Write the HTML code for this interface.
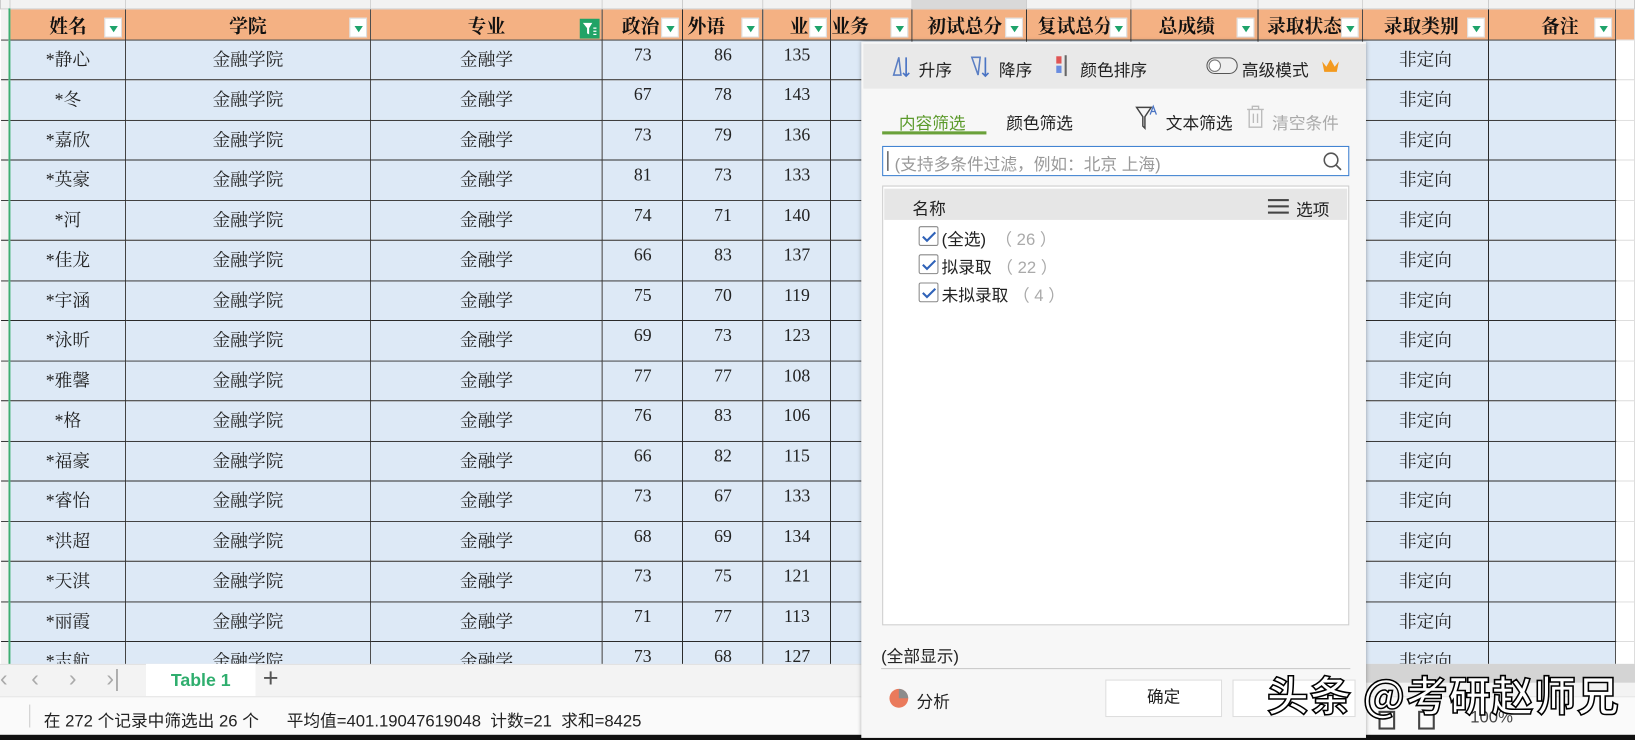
<!DOCTYPE html>
<html><head><meta charset="utf-8">
<style>
*{margin:0;padding:0;box-sizing:border-box}
html,body{width:1635px;height:740px;overflow:hidden;background:#fff}
#w{position:absolute;left:0;top:0;width:1568px;height:710px;transform:scale(1.04273,1.04225);transform-origin:0 0;overflow:hidden;background:#fff}
.serif{font-family:"Liberation Serif","Noto Serif CJK SC",serif}
.sans{font-family:"Liberation Sans","Noto Sans CJK SC",sans-serif}
table{position:absolute;left:0;top:0;border-collapse:collapse;table-layout:fixed}
td{border:1px solid #2a2a2a;font-family:"Liberation Serif","Noto Serif CJK SC",serif;font-size:17px;color:#222;text-align:center;vertical-align:top;padding-top:4px;background:#dde9f6;height:38.5px;overflow:hidden;white-space:nowrap;position:relative}
tr.let td{height:8px;background:#f2f2f2;border:1px solid #ccc;border-top:none;padding:0}
tr.hd td{height:30px;background:#f4b183;font-weight:bold;font-size:18px;color:#111;padding-top:2px;vertical-align:middle}
td.rn{background:#f2f2f2;border-left:none;border-right:2px solid #3dae73;color:#2e9e60;font-size:12px}
td.e{background:#fff;border:1px solid #ddd}
.dd{position:absolute;right:3px;top:8px;width:17px;height:19px;background:#fff;border:1px solid #ddd}
.dd:after{content:"";position:absolute;left:4px;top:7px;border-left:4px solid transparent;border-right:4px solid transparent;border-top:6px solid #1ea36a}
.fl{position:absolute;right:2px;top:9px;width:19px;height:19px;background:#21a366}
.dlg{position:absolute;left:826px;top:40px;width:484px;height:668px;background:#f7f7f7;box-shadow:0 0 4px rgba(0,0,0,.35);font-family:"Liberation Sans","Noto Sans CJK SC",sans-serif;font-size:16px;color:#222}
.dlg div{position:absolute}
td.h1{text-align:right;padding-right:0}
</style></head><body><div id="w">
<table>
<colgroup><col style="width:9px"><col style="width:111px"><col style="width:235px"><col style="width:223px"><col style="width:77px"><col style="width:77px"><col style="width:65px"><col style="width:78px"><col style="width:110px"><col style="width:100px"><col style="width:122px"><col style="width:100px"><col style="width:121px"><col style="width:122px"><col style="width:18px"></colgroup>
<tr class="let"><td></td><td></td><td></td><td></td><td></td><td></td><td></td><td></td><td style="background:#d9d9d9"></td><td></td><td></td><td></td><td></td><td></td><td></td></tr>
<tr class="hd"><td class="rn" style="background:#f2f2f2"></td><td>姓名<span class="dd"></span></td><td>学院<span class="dd"></span></td><td>专业<span class="fl"><svg width="19" height="19" viewBox="0 0 19 19" style="position:absolute;left:0;top:0"><path d="M3 4 H12 L9 9 V15 L7 14 V9 Z" fill="#fff"/><path d="M13 9 H16 M13 12 H16 M13 15 H16" stroke="#fff" stroke-width="1.2"/></svg></span></td><td style="text-align:left;padding-left:18px">政治<span class="dd"></span></td><td style="text-align:left;padding-left:4px">外语<span class="dd"></span></td><td style="text-align:left;padding-left:25px">业<span class="dd"></span></td><td style="text-align:left">业务<span class="dd"></span></td><td style="text-align:left;padding-left:14px">初试总分<span class="dd"></span></td><td style="text-align:left;padding-left:10px">复试总分<span class="dd"></span></td><td style="text-align:left;padding-left:26px">总成绩<span class="dd"></span></td><td style="text-align:left;padding-left:8px">录取状态<span class="dd"></span></td><td style="text-align:left;padding-left:20px">录取类别<span class="dd"></span></td><td style="text-align:left;padding-left:50px">备注<span class="dd"></span></td><td class="e"></td></tr>
<tr><td class="rn"></td><td>*静心</td><td>金融学院</td><td>金融学</td><td>73</td><td>86</td><td>135</td><td class="h1">1</td><td></td><td></td><td></td><td></td><td>非定向</td><td></td><td class="e"></td></tr>
<tr><td class="rn"></td><td>*冬</td><td>金融学院</td><td>金融学</td><td>67</td><td>78</td><td>143</td><td class="h1">1</td><td></td><td></td><td></td><td></td><td>非定向</td><td></td><td class="e"></td></tr>
<tr><td class="rn"></td><td>*嘉欣</td><td>金融学院</td><td>金融学</td><td>73</td><td>79</td><td>136</td><td class="h1">1</td><td></td><td></td><td></td><td></td><td>非定向</td><td></td><td class="e"></td></tr>
<tr><td class="rn"></td><td>*英豪</td><td>金融学院</td><td>金融学</td><td>81</td><td>73</td><td>133</td><td class="h1">1</td><td></td><td></td><td></td><td></td><td>非定向</td><td></td><td class="e"></td></tr>
<tr><td class="rn"></td><td>*河</td><td>金融学院</td><td>金融学</td><td>74</td><td>71</td><td>140</td><td class="h1">1</td><td></td><td></td><td></td><td></td><td>非定向</td><td></td><td class="e"></td></tr>
<tr><td class="rn"></td><td>*佳龙</td><td>金融学院</td><td>金融学</td><td>66</td><td>83</td><td>137</td><td class="h1">1</td><td></td><td></td><td></td><td></td><td>非定向</td><td></td><td class="e"></td></tr>
<tr><td class="rn"></td><td>*宇涵</td><td>金融学院</td><td>金融学</td><td>75</td><td>70</td><td>119</td><td class="h1">1</td><td></td><td></td><td></td><td></td><td>非定向</td><td></td><td class="e"></td></tr>
<tr><td class="rn"></td><td>*泳昕</td><td>金融学院</td><td>金融学</td><td>69</td><td>73</td><td>123</td><td class="h1">1</td><td></td><td></td><td></td><td></td><td>非定向</td><td></td><td class="e"></td></tr>
<tr><td class="rn"></td><td>*雅馨</td><td>金融学院</td><td>金融学</td><td>77</td><td>77</td><td>108</td><td class="h1">1</td><td></td><td></td><td></td><td></td><td>非定向</td><td></td><td class="e"></td></tr>
<tr><td class="rn"></td><td>*格</td><td>金融学院</td><td>金融学</td><td>76</td><td>83</td><td>106</td><td class="h1">1</td><td></td><td></td><td></td><td></td><td>非定向</td><td></td><td class="e"></td></tr>
<tr><td class="rn"></td><td>*福豪</td><td>金融学院</td><td>金融学</td><td>66</td><td>82</td><td>115</td><td class="h1">1</td><td></td><td></td><td></td><td></td><td>非定向</td><td></td><td class="e"></td></tr>
<tr><td class="rn"></td><td>*睿怡</td><td>金融学院</td><td>金融学</td><td>73</td><td>67</td><td>133</td><td class="h1">1</td><td></td><td></td><td></td><td></td><td>非定向</td><td></td><td class="e"></td></tr>
<tr><td class="rn"></td><td>*洪超</td><td>金融学院</td><td>金融学</td><td>68</td><td>69</td><td>134</td><td class="h1">1</td><td></td><td></td><td></td><td></td><td>非定向</td><td></td><td class="e"></td></tr>
<tr><td class="rn"></td><td>*天淇</td><td>金融学院</td><td>金融学</td><td>73</td><td>75</td><td>121</td><td class="h1">1</td><td></td><td></td><td></td><td></td><td>非定向</td><td></td><td class="e"></td></tr>
<tr><td class="rn"></td><td>*丽霞</td><td>金融学院</td><td>金融学</td><td>71</td><td>77</td><td>113</td><td class="h1">1</td><td></td><td></td><td></td><td></td><td>非定向</td><td></td><td class="e"></td></tr>
<tr><td class="rn"></td><td>*志航</td><td>金融学院</td><td>金融学</td><td>73</td><td>68</td><td>127</td><td class="h1">1</td><td></td><td></td><td></td><td></td><td>非定向</td><td></td><td class="e"></td></tr>
</table>

<!-- tab bar -->
<div class="sans" style="position:absolute;left:0;top:637px;width:1568px;height:31px;background:#f3f3f3;border-top:1px solid #e2e2e2"></div>
<div class="sans" style="position:absolute;left:1310px;top:637px;width:258px;height:18px;background:#d4d4d4"></div>
<div class="sans" style="position:absolute;left:0;top:638px;font-size:22px;color:#aaa">‹</div>
<div class="sans" style="position:absolute;left:30px;top:638px;font-size:22px;color:#aaa">‹</div>
<div class="sans" style="position:absolute;left:66px;top:638px;font-size:22px;color:#aaa">›</div>
<div class="sans" style="position:absolute;left:102px;top:638px;font-size:22px;color:#aaa">›|</div>
<div class="sans" style="position:absolute;left:140px;top:637px;width:105px;height:31px;background:#fff;color:#2fae6e;font-weight:bold;font-size:17px;text-align:center;line-height:31px">Table 1</div>
<div class="sans" style="position:absolute;left:252px;top:635px;font-size:26px;color:#555">+</div>
<!-- status bar -->
<div class="sans" style="position:absolute;left:0;top:668px;width:1568px;height:37px;background:#fafafa;border-top:1px solid #e4e4e4"></div>
<div class="sans" style="position:absolute;left:28px;top:676px;width:1px;height:22px;background:#ccc"></div>
<div class="sans" style="position:absolute;left:42px;top:678px;font-size:16px;color:#222;white-space:pre">在 272 个记录中筛选出 26 个      平均值=401.19047619048  计数=21  求和=8425</div>
<div class="sans" style="position:absolute;left:1322px;top:682px;width:16px;height:18px;border:2px solid #444"></div>
<div class="sans" style="position:absolute;left:1360px;top:682px;width:16px;height:18px;border:2px solid #444"></div>
<div class="sans" style="position:absolute;left:1410px;top:680px;font-size:16px;color:#444">100%</div>
<div style="position:absolute;left:0;top:705px;width:1568px;height:5px;background:#111"></div>

<!-- dialog -->
<div class="dlg">
 <div style="left:2px;top:2px;width:482px;height:43px;background:#e9e9e9"></div>
 <svg style="position:absolute;left:28px;top:12px" width="24" height="24" viewBox="0 0 24 24"><path d="M3 20 L8 3 L10 20 Z" fill="none" stroke="#5b7fc4" stroke-width="1.5"/><path d="M15 3 V21 M12 18 L15 21 L18 18" fill="none" stroke="#4a74c4" stroke-width="1.6"/></svg>
 <div style="left:55px;top:14px">升序</div>
 <svg style="position:absolute;left:104px;top:12px" width="24" height="24" viewBox="0 0 24 24"><path d="M2 3 H10 L8 20 Z" fill="none" stroke="#5b7fc4" stroke-width="1.5"/><path d="M15 3 V21 M12 18 L15 21 L18 18" fill="none" stroke="#4a74c4" stroke-width="1.6"/></svg>
 <div style="left:132px;top:14px">降序</div>
 <div style="left:187px;top:14px;width:5px;height:7px;background:#e05555"></div>
 <div style="left:187px;top:23px;width:5px;height:7px;background:#6a8de0"></div>
 <div style="left:195px;top:13px;width:2px;height:20px;background:#666"></div>
 <div style="left:210px;top:14px">颜色排序</div>
 <div style="left:331px;top:15px;width:30px;height:16px;border:1.5px solid #555;border-radius:9px;background:#eee"></div>
 <div style="left:333px;top:17px;width:12px;height:12px;border-radius:50%;background:#fff;border:1px solid #777"></div>
 <div style="left:365px;top:14px">高级模式</div>
 <svg style="position:absolute;left:441px;top:15px" width="18" height="16" viewBox="0 0 18 16"><path d="M1 4 L5 9 L9 2 L13 9 L17 4 L15 14 H3 Z" fill="#f39a1f"/></svg>

 <div style="left:36px;top:65px;color:#5b9a2b">内容筛选</div>
 <div style="left:20px;top:86px;width:100px;height:3px;background:#6aa13a"></div>
 <div style="left:139px;top:65px">颜色筛选</div>
 <svg style="position:absolute;left:262px;top:60px" width="24" height="26" viewBox="0 0 24 26"><path d="M2 3 H16 L10 12 V23 L8 21 V12 Z" fill="none" stroke="#444" stroke-width="1.4"/><path d="M15 10 L18 2 L21 10 M16 7 H20" fill="none" stroke="#4a74c4" stroke-width="1.2"/></svg>
 <div style="left:292px;top:65px">文本筛选</div>
 <svg style="position:absolute;left:368px;top:60px" width="20" height="24" viewBox="0 0 20 24"><path d="M2 5 H18 M7 5 V2 H13 V5 M4 5 V22 H16 V5 M8 9 V18 M12 9 V18" fill="none" stroke="#bbb" stroke-width="1.3"/></svg>
 <div style="left:394px;top:65px;color:#aaa">清空条件</div>

 <div style="left:20px;top:100px;width:448px;height:29px;background:#fff;border:1.5px solid #3b7fd0"></div>
 <div style="left:25px;top:105px;width:1px;height:19px;background:#222"></div>
 <div style="left:32px;top:104px;color:#999">(支持多条件过滤，例如：北京 上海)</div>
 <svg style="position:absolute;left:442px;top:105px" width="20" height="20" viewBox="0 0 20 20"><circle cx="8.5" cy="8.5" r="6.5" fill="none" stroke="#555" stroke-width="1.5"/><path d="M13 13 L18 18" stroke="#555" stroke-width="1.6"/></svg>

 <div style="left:20px;top:138px;width:448px;height:422px;background:#fff;border:1.5px solid #ccc"></div>
 <div style="left:22px;top:141px;width:444px;height:30px;background:#e6e6e6"></div>
 <div style="left:49px;top:147px">名称</div>
 <div style="left:390px;top:151px;width:20px;height:2px;background:#444;box-shadow:0 6px 0 #444,0 12px 0 #444"></div>
 <div style="left:417px;top:148px">选项</div>

 <div style="left:55px;top:177px;width:19px;height:19px;border:1.5px solid #888;border-radius:2px;background:#fff"></div>
 <svg style="position:absolute;left:58px;top:181px" width="14" height="12" viewBox="0 0 14 12"><path d="M1 6 L5 10 L13 2" fill="none" stroke="#2f62b8" stroke-width="2"/></svg>
 <div style="left:77px;top:176px">(全选)<span style="color:#aaa">&nbsp;&nbsp;（ 26 ）</span></div>
 <div style="left:55px;top:204px;width:19px;height:19px;border:1.5px solid #888;border-radius:2px;background:#fff"></div>
 <svg style="position:absolute;left:58px;top:208px" width="14" height="12" viewBox="0 0 14 12"><path d="M1 6 L5 10 L13 2" fill="none" stroke="#2f62b8" stroke-width="2"/></svg>
 <div style="left:77px;top:203px">拟录取<span style="color:#aaa">&nbsp;（ 22 ）</span></div>
 <div style="left:55px;top:231px;width:19px;height:19px;border:1.5px solid #888;border-radius:2px;background:#fff"></div>
 <svg style="position:absolute;left:58px;top:235px" width="14" height="12" viewBox="0 0 14 12"><path d="M1 6 L5 10 L13 2" fill="none" stroke="#2f62b8" stroke-width="2"/></svg>
 <div style="left:77px;top:230px">未拟录取<span style="color:#aaa">&nbsp;（ 4 ）</span></div>

 <div style="left:19px;top:576px">(全部显示)</div>
 <div style="left:19px;top:601px;width:450px;height:1px;background:#c8c8c8"></div>
 <svg style="position:absolute;left:26px;top:620px" width="20" height="20" viewBox="0 0 20 20"><circle cx="10" cy="10" r="9" fill="#ea7a5c"/><path d="M10 10 V1 A9 9 0 0 1 19 10 Z" fill="#8c8c8c"/></svg>
 <div style="left:53px;top:620px">分析</div>
 <div style="left:234px;top:612px;width:112px;height:36px;background:#fff;border:1px solid #ddd;text-align:center;line-height:34px">确定</div>
 <div style="left:356px;top:612px;width:118px;height:36px;background:#fff;border:1px solid #ddd"></div>
</div>

<div style="position:absolute;left:1215px;top:636px;font-family:'Noto Sans CJK SC',sans-serif;font-weight:bold;font-size:40px;color:#fff;-webkit-text-stroke:1.5px #000;white-space:nowrap;letter-spacing:1px">头条 @考研赵师兄</div>
</div></body></html>
